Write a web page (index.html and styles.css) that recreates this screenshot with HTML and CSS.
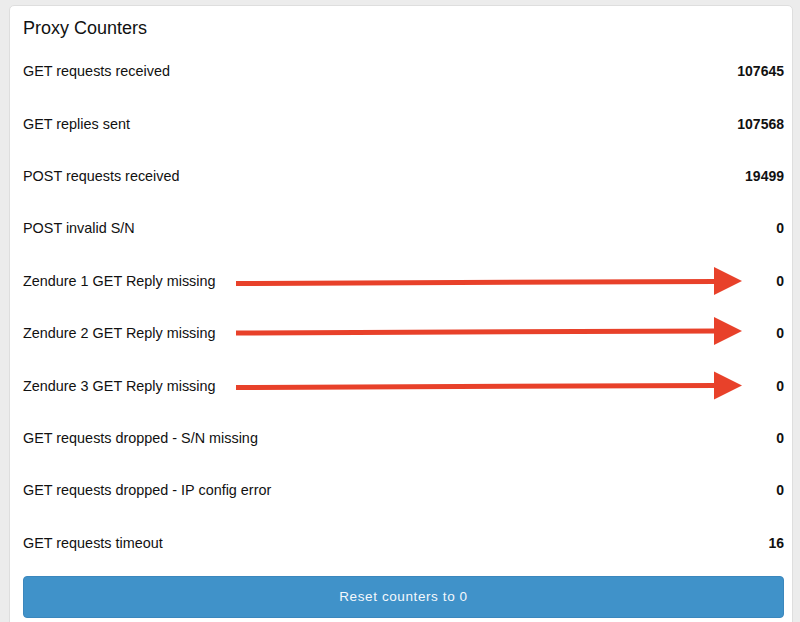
FILE: index.html
```html
<!DOCTYPE html>
<html>
<head>
<meta charset="utf-8">
<link rel="stylesheet" href="styles.css">
</head>
<body>
<div class="card">
  <h2 class="title">Proxy Counters</h2>
  <div class="rows">
    <div class="row"><span>GET requests received</span><b>107645</b></div>
    <div class="row"><span>GET replies sent</span><b>107568</b></div>
    <div class="row"><span>POST requests received</span><b>19499</b></div>
    <div class="row"><span>POST invalid S/N</span><b>0</b></div>
    <div class="row"><span>Zendure 1 GET Reply missing</span><b>0</b></div>
    <div class="row"><span>Zendure 2 GET Reply missing</span><b>0</b></div>
    <div class="row"><span>Zendure 3 GET Reply missing</span><b>0</b></div>
    <div class="row"><span>GET requests dropped - S/N missing</span><b>0</b></div>
    <div class="row"><span>GET requests dropped - IP config error</span><b>0</b></div>
    <div class="row"><span>GET requests timeout</span><b>16</b></div>
  </div>
  <button class="reset">Reset counters to 0</button>
</div>
<svg class="arrows" width="800" height="622" viewBox="0 0 800 622">
  <g fill="#e8412a" stroke="#e8412a">
    <line x1="236" y1="283.5" x2="716" y2="281.5" stroke-width="5"/>
    <polygon points="714,267 742,281 714,295" stroke="none"/>
    <line x1="236" y1="333" x2="716" y2="331" stroke-width="5"/>
    <polygon points="714,317 742,331 714,345" stroke="none"/>
    <line x1="236" y1="387.5" x2="716" y2="385.5" stroke-width="5"/>
    <polygon points="714,371.5 742,385.5 714,399.5" stroke="none"/>
  </g>
</svg>
</body>
</html>
```
FILE: styles.css
```css
html, body {
  margin: 0;
  padding: 0;
  background: #ececec;
  font-family: "Liberation Sans", Arial, sans-serif;
  color: #111;
  overflow: hidden;
}
.card {
  margin: 5px 7px 0 9px;
  background: #fff;
  border: 1px solid #dedede;
  border-radius: 5px;
  padding: 10px 8px 20px 13px;
  height: 640px;
  box-sizing: border-box;
}
.title {
  margin: 0;
  font-size: 18px;
  font-weight: normal;
  line-height: 22px;
  padding-top: 1px;
}
.rows {
  margin-top: 6px;
}
.row {
  height: 52.4px;
  display: flex;
  align-items: center;
  justify-content: space-between;
  font-size: 14.4px;
}
.row b {
  font-weight: bold;
  font-size: 14px;
}
.reset {
  display: block;
  width: 100%;
  height: 42px;
  margin-top: 6.6px;
  background: #4092c9;
  border: 1px solid #3b87bd;
  border-radius: 4px;
  color: #f4f8fc;
  font-family: "Liberation Sans", Arial, sans-serif;
  font-size: 13.5px;
  letter-spacing: 0.6px;
}
.arrows {
  position: absolute;
  left: 0;
  top: 0;
}
```
